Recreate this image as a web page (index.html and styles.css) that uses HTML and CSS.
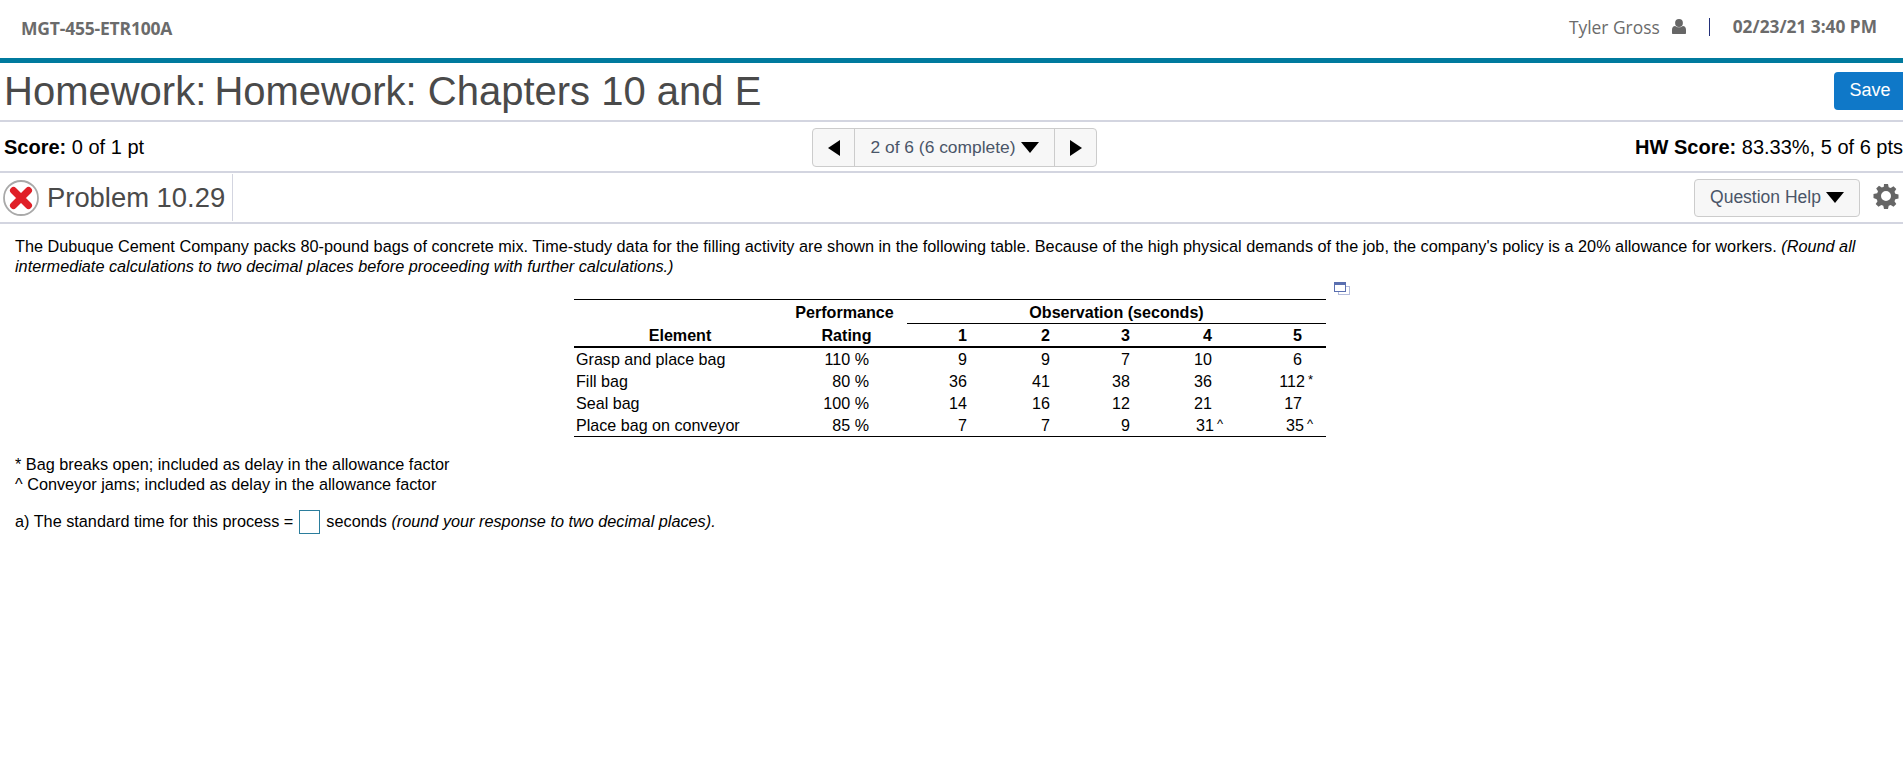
FILE: index.html
```html
<!DOCTYPE html>
<html lang="en">
<head>
<meta charset="utf-8">
<title>Homework: Chapters 10 and E</title>
<link rel="stylesheet" href="styles.css">
</head>
<body>
<header class="topbar">
  <span class="course">MGT-455-ETR100A</span>
  <div class="user">
    <span class="user-name">Tyler Gross</span>
    <svg class="user-icon" viewBox="0 0 14 15"><circle cx="7" cy="4" r="3.900"/><path d="M0 14v-3.200C0 8.600 1.200 7 3.200 7c.9.800 2.300 1.300 3.800 1.300s2.900-.5 3.800-1.300c2 0 3.200 1.600 3.200 3.800V14c0 .6-.4 1-1 1H1c-.6 0-1-.4-1-1z"/></svg>
    <span class="user-sep"></span>
    <span class="user-date">02/23/21 3:40 PM</span>
  </div>
</header>
<div class="row title-row">
  <h1 class="title"><span class="title-a">Homework:</span> Homework: Chapters 10 and E</h1>
  <button class="save">Save</button>
</div>
<div class="row score-row">
  <div class="score"><b>Score:</b> 0 of 1 pt</div>
  <div class="pager">
    <span class="pager-btn"><i class="tri tri-left"></i></span>
    <span class="pager-mid">2 of 6 (6 complete) <i class="tri tri-down"></i></span>
    <span class="pager-btn"><i class="tri tri-right"></i></span>
  </div>
  <div class="score hw"><b>HW Score:</b> 83.33%, 5 of 6 pts</div>
</div>
<div class="row problem-row">
  <div class="problem">
    <svg class="status" viewBox="0 0 36 36"><circle cx="18" cy="18" r="17" fill="#fff" stroke="#a9a9a9" stroke-width="1.800"/><path d="M10.500 10.500L25.500 25.500M25.500 10.500L10.500 25.500" stroke="#e01f27" stroke-width="7" stroke-linecap="round"/></svg>
    <span class="problem-name">Problem 10.29</span>
  </div>
  <div class="tools">
    <button class="help">Question Help <i class="tri tri-down"></i></button>
    <svg class="gear" viewBox="0 0 24 24"><path fill-rule="evenodd" d="M10 0h4l.7 3.200 2 .8 2.800-1.800 2.800 2.800-1.800 2.800.8 2 3.200.7v4l-3.200.7-.8 2 1.800 2.800-2.800 2.800-2.800-1.800-2 .8-.7 3.200h-4l-.7-3.200-2-.8-2.800 1.800-2.800-2.800 1.800-2.800-.8-2L-.5 14V10l3.700-.7.8-2L2.200 4.500 5 1.700l2.800 1.800 2-.8L10 0zM12 7a5 5 0 1 0 0 10 5 5 0 0 0 0-10z"/></svg>
  </div>
</div>
<main class="content">
  <p class="intro">The Dubuque Cement Company packs 80-pound bags of concrete mix. Time-study data for the filling activity are shown in the following table. Because of the high physical demands of the job, the company's policy is a 20% allowance for workers. <em>(Round all</em> <em>intermediate calculations to two decimal places before proceeding with further calculations.)</em></p>
  <div class="table-wrap">
    <table class="data">
      <colgroup><col class="c-el"><col class="c-pf"><col class="c-1"><col class="c-2"><col class="c-3"><col class="c-4"><col class="c-5"></colgroup>
      <thead>
        <tr class="h1"><th></th><th class="ctr perf">Performance</th><th colspan="5" class="ctr obs">Observation (seconds)</th></tr>
        <tr class="h2"><th class="ctr">Element</th><th class="ctr">Rating</th><th class="num">1</th><th class="num">2</th><th class="num">3</th><th class="num">4</th><th class="num n5">5</th></tr>
      </thead>
      <tbody>
        <tr><td class="el">Grasp and place bag</td><td class="pf">110 %</td><td class="num">9</td><td class="num">9</td><td class="num">7</td><td class="num">10</td><td class="num n5">6</td></tr>
        <tr><td class="el">Fill bag</td><td class="pf">80 %</td><td class="num">36</td><td class="num">41</td><td class="num">38</td><td class="num">36</td><td class="num n5">112<sup class="mark">*</sup></td></tr>
        <tr><td class="el">Seal bag</td><td class="pf">100 %</td><td class="num">14</td><td class="num">16</td><td class="num">12</td><td class="num">21</td><td class="num n5">17</td></tr>
        <tr><td class="el">Place bag on conveyor</td><td class="pf">85 %</td><td class="num">7</td><td class="num">7</td><td class="num">9</td><td class="num">31<sup class="mark">^</sup></td><td class="num n5">35<sup class="mark">^</sup></td></tr>
      </tbody>
    </table>
    <svg class="expand" viewBox="0 0 16 13"><rect x="4.500" y="4.500" width="11" height="8" fill="#fff" stroke="#b4bcdc"/><rect x=".5" y=".5" width="11" height="9" fill="#fff" stroke="#5a6fb0"/><rect x="0" y="0" width="12" height="3" fill="#5a6fb0"/></svg>
  </div>
  <p class="notes">* Bag breaks open; included as delay in the allowance factor<br>^ Conveyor jams; included as delay in the allowance factor</p>
  <p class="answer">a) The standard time for this process = <span class="field"></span> seconds <em>(round your response to two decimal places).</em></p>
</main>
</body>
</html>
```
FILE: styles.css
```css
* { box-sizing: border-box; }
html, body { margin: 0; padding: 0; }
body { background: #fff; color: #000; font-family: "Liberation Sans", Arial, sans-serif; height: 761px; overflow: hidden; }

.topbar { height: 63px; border-bottom: 5px solid #007a9e; display: flex; justify-content: space-between; align-items: center; padding: 0 26px 5px 21px; font-family: "Open Sans", sans-serif; color: #6b6b6b; }
.course { font-size: 17.500px; font-weight: 700; letter-spacing: -.2px; padding-top: 2px; }
.user { display: flex; align-items: center; font-size: 17.400px; }
.user-icon { width: 14px; height: 15px; margin-left: 12px; fill: #666; }
.user-sep { width: 1px; height: 18px; background: #23307a; margin: 0 23px; }
.user-date { font-weight: 700; font-size: 17.300px; }

.row { display: flex; align-items: center; justify-content: space-between; border-bottom: 2px solid #d3d5e0; }
.title-row { height: 59px; padding-left: 4px; }
.title { margin: 0; font-weight: 400; font-size: 40px; color: #4a4a4a; }
.title-a { margin-right: -3px; }
.save { width: 69px; height: 38px; margin-top: -2px; padding: 0 0 0 3px; background: #0f78c8; color: #fff; border: 0; border-radius: 4px 0 0 4px; font: 18px "Liberation Sans", Arial, sans-serif; }

.score-row { height: 51px; padding: 2px 0 0 4px; display: grid; grid-template-columns: 808px 285px 1fr; }
.score { font-size: 20px; }
.hw { white-space: nowrap; text-align: right; }
.pager { display: flex; height: 39px; border: 1px solid #ccc; border-radius: 4px; background: #f7f7f7; color: #4a5568; font-size: 17.400px; }
.pager-btn { flex: 1; display: flex; align-items: center; justify-content: center; }
.pager-mid { width: 201px; border-left: 1px solid #ccc; border-right: 1px solid #ccc; display: flex; align-items: center; justify-content: center; gap: 5px; }

.tri { display: inline-block; width: 0; height: 0; border-style: solid; border-color: transparent; }
.tri-left { border-width: 8px 12px 8px 0; border-right-color: #000; }
.tri-right { border-width: 8px 0 8px 12px; border-left-color: #000; }
.tri-down { border-width: 11px 9px 0 9px; border-top-color: #000; }

.problem-row { height: 51px; }
.problem { display: flex; align-items: center; width: 233px; height: 47px; padding-left: 3px; border-right: 1px solid #d3d5e0; }
.status { width: 36px; height: 36px; }
.problem-name { margin-left: 8px; font-size: 27.400px; color: #4a4a4a; }
.tools { display: flex; align-items: center; padding-right: 5px; }
.help { width: 166px; height: 38px; background: #f7f7f7; border: 1px solid #ccc; border-radius: 4px; color: #4a5568; font: 17.500px "Liberation Sans", Arial, sans-serif; display: flex; align-items: center; justify-content: center; gap: 5px; }
.gear { width: 24px; height: 24px; margin: 0 0 3px 14px; fill: #666; overflow: visible; }

.content { padding: 12px 15px 0; font-size: 16.250px; line-height: 20px; }
.intro { margin: 0; }
.table-wrap { margin: 23px 0 0 559px; width: 780px; position: relative; }
.data { border-collapse: collapse; table-layout: fixed; width: 752px; font-size: 16.100px; line-height: 22px; border-top: 1px solid #000; border-bottom: 1px solid #000; }
.c-el { width: 212px; } .c-pf { width: 121px; } .c-1 { width: 80px; } .c-2 { width: 83px; } .c-3 { width: 80px; } .c-4 { width: 82px; } .c-5 { width: 94px; }
.data th, .data td { padding: 0; height: 22px; font-weight: 400; }
.data th { font-weight: 700; }
.h1 th { height: 24px; }
.h2 th { height: 23px; border-bottom: 2px solid #000; }
.obs { border-bottom: 1px solid #000; }
.ctr { text-align: center; }
.data .perf { padding-right: 4px; }
.num { text-align: right; padding-right: 20px !important; }
.n5 { padding-right: 24px !important; }
.pf { text-align: right; padding-right: 38px !important; }
.el { text-align: left; padding-left: 2px !important; }
.mark { font-size: 13px; line-height: 0; margin-left: 3px; margin-right: -11px; vertical-align: 3px; }
.expand { position: absolute; top: -17px; left: 760px; width: 16px; height: 13px; }

.notes { margin: 17px 0 0; }
.answer { margin: 16px 0 0; }
.field { display: inline-block; width: 21px; height: 24px; margin: 0 2px 0 1px; border: 1px solid #2b7d9c; vertical-align: -7px; }
```
